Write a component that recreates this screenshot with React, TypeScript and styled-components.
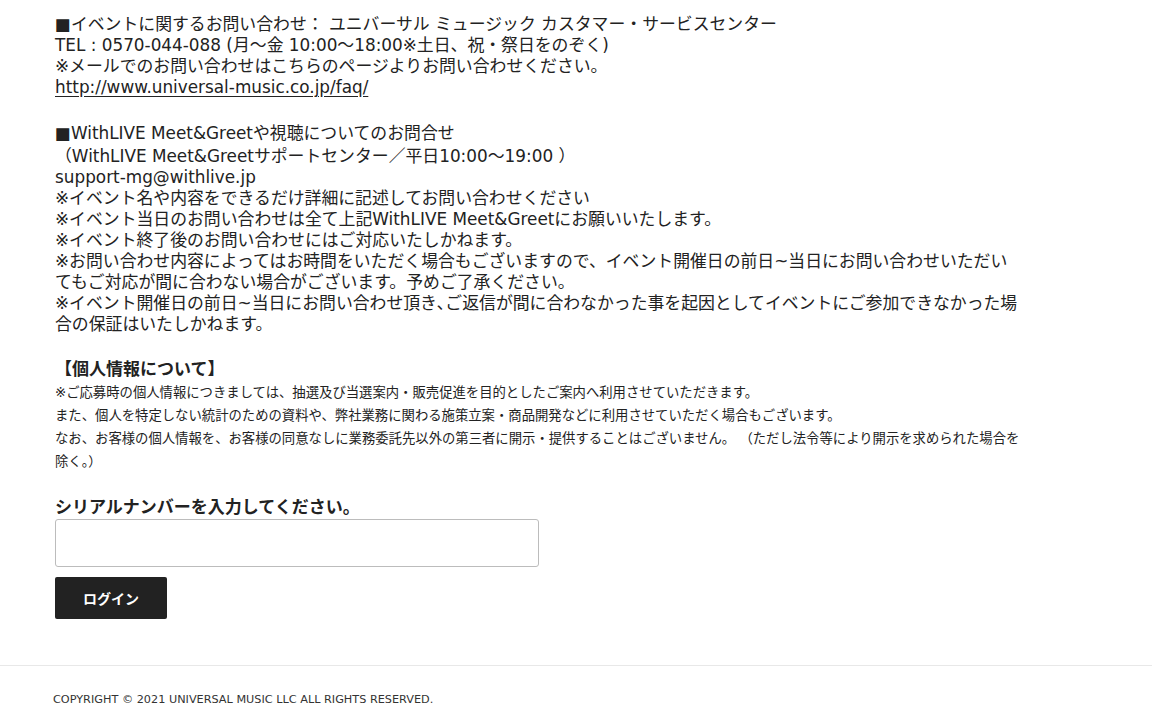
import { createGlobalStyle } from "styled-components";
import styled from "styled-components";

const GlobalStyle = createGlobalStyle`
  html, body {
    margin: 0;
    padding: 0;
    background: #fff;
  }
  body {
    font-family: "DejaVu Sans", "Noto Sans CJK JP", sans-serif;
    color: #222;
  }
`;

const Page = styled.div`
  display: flex;
  flex-direction: column;
  min-height: 722px;
`;

const Main = styled.main`
  padding: 14px 0 0 55px;
  display: flex;
  flex-direction: column;
  align-items: flex-start;
`;

const Block = styled.div<{ $gap?: number }>`
  font-size: 16.85px;
  line-height: 21px;
  white-space: nowrap;
  margin-top: ${(p) => p.$gap ?? 0}px;
`;

const BlockTitle = styled.div`
  margin-bottom: 2px;
`;

const Link = styled.a`
  color: #222;
  text-decoration: underline;
  text-underline-offset: 3px;
`;

const Heading = styled.h3`
  margin: 24px 0 0;
  font-size: 17px;
  line-height: 21px;
  font-weight: bold;
`;

const Small = styled.p`
  margin: 1px 0 0;
  font-size: 13.35px;
  line-height: 23px;
  white-space: nowrap;
`;

const Label = styled.label`
  margin-top: 24px;
  font-size: 17px;
  line-height: 21px;
  font-weight: bold;
`;

const SerialInput = styled.input`
  box-sizing: border-box;
  width: 484px;
  height: 48px;
  margin-top: 1px;
  border: 1px solid #bcbcbc;
  border-radius: 3px;
  padding: 0 12px;
  font-size: 16px;
  outline: none;
`;

const LoginButton = styled.button`
  margin-top: 10px;
  width: 112px;
  height: 42px;
  border: none;
  border-radius: 2px;
  background: #222;
  color: #fff;
  font-family: "Noto Sans CJK JP", sans-serif;
  font-weight: bold;
  font-size: 14px;
  cursor: pointer;
`;

const Footer = styled.footer`
  margin-top: 46px;
  border-top: 1px solid #e8e8e8;
  padding: 22px 0 0 53px;
`;

const Copyright = styled.small`
  font-size: 11.25px;
  line-height: 14px;
  color: #333;
`;

function App() {
  return (
    <Page>
      <GlobalStyle />
      <Main>
        <Block>
          ■イベントに関するお問い合わせ： ユニバーサル ミュージック カスタマー・サービスセンター
          <br />
          TEL : 0570-044-088 (月～金 10:00～18:00※土日、祝・祭日をのぞく)
          <br />
          ※メールでのお問い合わせはこちらのページよりお問い合わせください。
          <br />
          <Link href="#">http://www.universal-music.co.jp/faq/</Link>
        </Block>

        <Block $gap={25}>
          <BlockTitle>■WithLIVE Meet&amp;Greetや視聴についてのお問合せ</BlockTitle>
          （WithLIVE Meet&amp;Greetサポートセンター／平日10:00～19:00 ）
          <br />
          support-mg@withlive.jp
          <br />
          ※イベント名や内容をできるだけ詳細に記述してお問い合わせください
          <br />
          ※イベント当日のお問い合わせは全て上記WithLIVE Meet&amp;Greetにお願いいたします。
          <br />
          ※イベント終了後のお問い合わせにはご対応いたしかねます。
          <br />
          ※お問い合わせ内容によってはお時間をいただく場合もございますので、イベント開催日の前日~当日にお問い合わせいただい
          <br />
          てもご対応が間に合わない場合がございます。予めご了承ください。
          <br />
          ※イベント開催日の前日~当日にお問い合わせ頂き､ご返信が間に合わなかった事を起因としてイベントにご参加できなかった場
          <br />
          合の保証はいたしかねます。
        </Block>

        <Heading>【個人情報について】</Heading>
        <Small>
          ※ご応募時の個人情報につきましては、抽選及び当選案内・販売促進を目的としたご案内へ利用させていただきます。
          <br />
          また、個人を特定しない統計のための資料や、弊社業務に関わる施策立案・商品開発などに利用させていただく場合もございます。
          <br />
          なお、お客様の個人情報を、お客様の同意なしに業務委託先以外の第三者に開示・提供することはございません。 （ただし法令等により開示を求められた場合を
          <br />
          除く。）
        </Small>

        <Label htmlFor="serial">シリアルナンバーを入力してください。</Label>
        <SerialInput id="serial" type="text" />
        <LoginButton type="button">ログイン</LoginButton>
      </Main>

      <Footer>
        <Copyright>COPYRIGHT © 2021 UNIVERSAL MUSIC LLC ALL RIGHTS RESERVED.</Copyright>
      </Footer>
    </Page>
  );
}

export default App;
